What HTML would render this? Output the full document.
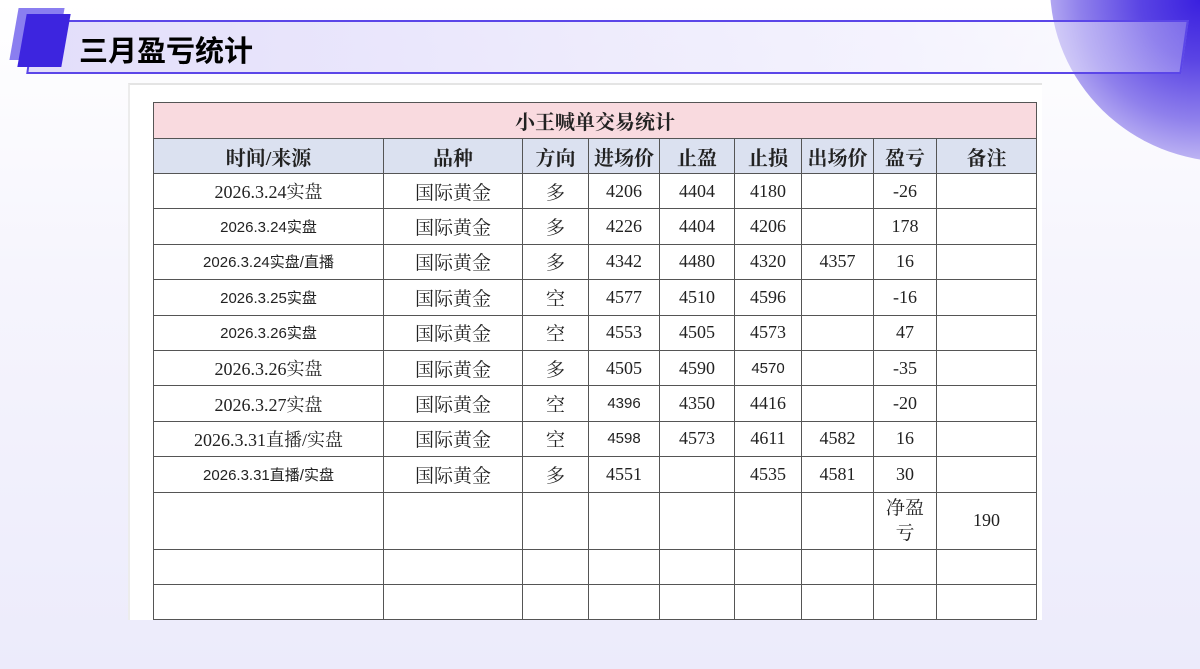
<!DOCTYPE html>
<html><head><meta charset="utf-8"><style>
*{margin:0;padding:0;box-sizing:border-box}
body{width:1200px;height:669px;overflow:hidden;position:relative;background:linear-gradient(180deg,#ffffff 0%,#f6f5fd 40%,#ecebfb 100%);font-family:"Liberation Serif","Noto Serif CJK SC",serif}
.circ{position:absolute;left:1050px;top:-190px;width:360px;height:352px;border-radius:50%;background:radial-gradient(circle at 150px 190px,#3a20df 0,#5a44e4 60px,#8f80ec 120px,#c9c1f5 170px,#efedfc 215px)}
.bar{position:absolute;left:30px;top:20px;width:1155px;height:54px;border:2px solid #5b46e8;transform:skewX(-8deg)}
.bar2{position:absolute;left:30px;top:20px;width:1155px;height:54px;background:linear-gradient(90deg,rgba(225,220,250,0.95),rgba(240,238,253,0.7) 75%,rgba(250,249,255,0.3) 100%);transform:skewX(-8deg)}
.sq1{position:absolute;left:14px;top:8px;width:46px;height:52px;background:#8a7ef0;transform:skewX(-10deg)}
.sq2{position:absolute;left:22px;top:14px;width:44px;height:53px;background:#3d25df;transform:skewX(-10deg)}
.title{position:absolute;left:79px;top:28px;font:bold 29px "Noto Sans CJK SC",sans-serif;color:#000}
.img{position:absolute;left:128px;top:83px;width:914px;height:537px;background:#fff;border-top:2px solid #e4e4e4;border-left:2px solid #ececec;overflow:hidden}
table{position:absolute;left:23px;top:17px;border-collapse:collapse;table-layout:fixed}
td{border:1.5px solid #555;text-align:center;font-size:19px;color:#222;height:35.4px;padding:0;white-space:nowrap;font-family:"Liberation Serif","Noto Serif CJK SC",serif}
.t td{background:#f9dadf;height:36px;font-weight:bold;font-size:20px}
.h td{background:#dbe1f0;font-weight:bold;font-size:20px;height:35px}
.s{font-size:15px;font-family:"Liberation Sans","Noto Sans CJK SC",sans-serif}
.m{font-size:18px}
</style></head><body>
<div class="circ"></div>
<div class="bar2"></div>
<div class="bar"></div>
<div class="sq1"></div><div class="sq2"></div>
<div class="title">三月盈亏统计</div>
<div class="img">
<table>
<colgroup><col style="width:230px"><col style="width:139px"><col style="width:66px"><col style="width:71px"><col style="width:75px"><col style="width:67px"><col style="width:72px"><col style="width:63px"><col style="width:100px"></colgroup>
<tr class="t"><td colspan="9">小王喊单交易统计</td></tr>
<tr class="h"><td>时间/来源</td><td>品种</td><td>方向</td><td>进场价</td><td>止盈</td><td>止损</td><td>出场价</td><td>盈亏</td><td>备注</td></tr>
<tr><td class="m">2026.3.24实盘</td><td>国际黄金</td><td>多</td><td class="m">4206</td><td class="m">4404</td><td class="m">4180</td><td></td><td class="m">-26</td><td></td></tr>
<tr><td class="s">2026.3.24实盘</td><td>国际黄金</td><td>多</td><td class="m">4226</td><td class="m">4404</td><td class="m">4206</td><td></td><td class="m">178</td><td></td></tr>
<tr><td class="s">2026.3.24实盘/直播</td><td>国际黄金</td><td>多</td><td class="m">4342</td><td class="m">4480</td><td class="m">4320</td><td class="m">4357</td><td class="m">16</td><td></td></tr>
<tr><td class="s">2026.3.25实盘</td><td>国际黄金</td><td>空</td><td class="m">4577</td><td class="m">4510</td><td class="m">4596</td><td></td><td class="m">-16</td><td></td></tr>
<tr><td class="s">2026.3.26实盘</td><td>国际黄金</td><td>空</td><td class="m">4553</td><td class="m">4505</td><td class="m">4573</td><td></td><td class="m">47</td><td></td></tr>
<tr><td class="m">2026.3.26实盘</td><td>国际黄金</td><td>多</td><td class="m">4505</td><td class="m">4590</td><td class="s">4570</td><td></td><td class="m">-35</td><td></td></tr>
<tr><td class="m">2026.3.27实盘</td><td>国际黄金</td><td>空</td><td class="s">4396</td><td class="m">4350</td><td class="m">4416</td><td></td><td class="m">-20</td><td></td></tr>
<tr><td class="m">2026.3.31直播/实盘</td><td>国际黄金</td><td>空</td><td class="s">4598</td><td class="m">4573</td><td class="m">4611</td><td class="m">4582</td><td class="m">16</td><td></td></tr>
<tr><td class="s">2026.3.31直播/实盘</td><td>国际黄金</td><td>多</td><td class="m">4551</td><td></td><td class="m">4535</td><td class="m">4581</td><td class="m">30</td><td></td></tr>
<tr><td style="height:57px"></td><td></td><td></td><td></td><td></td><td></td><td></td><td style="white-space:normal;line-height:25px;font-size:19px">净盈<br>亏</td><td class="m">190</td></tr>
<tr><td></td><td></td><td></td><td></td><td></td><td></td><td></td><td></td><td></td></tr>
<tr><td></td><td></td><td></td><td></td><td></td><td></td><td></td><td></td><td></td></tr>
</table>
</div>
</body></html>
